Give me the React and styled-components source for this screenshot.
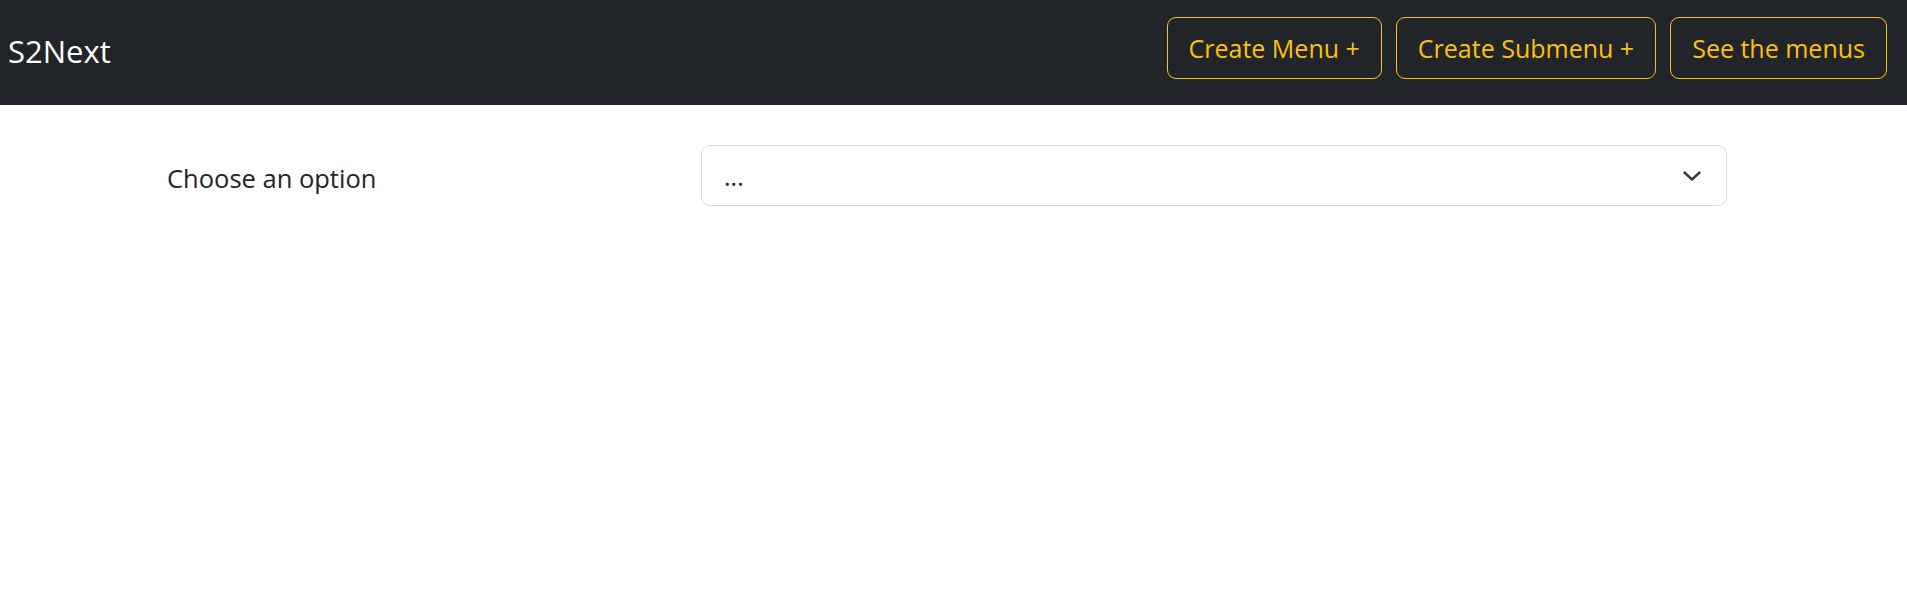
import styled, { createGlobalStyle } from 'styled-components'

const GlobalStyle = createGlobalStyle`
body {
    margin: 0;
    background: #fff;
    font-family: "Open Sans", "Noto Sans", sans-serif;
    color: #212529;
}
`

const Navbar = styled.nav`
display: flex;
align-items: center;
justify-content: space-between;
height: 105px;
padding: 0 20px 0 8px;
background-color: #212529;
`
const Brand = styled.a`
color: #fff;
font-size: 31px;
line-height: 1;
text-decoration: none;
padding-bottom: 2px;
`
const Actions = styled.div`
display: flex;
gap: 14px;
margin-bottom: 9px;
`
const NavButton = styled.button`
height: 62px;
padding: 0 21px;
font-family: inherit;
font-size: 25px;
color: #ffc107;
background: transparent;
border: 1.5px solid #ffc107;
border-radius: 9px;
cursor: pointer;
&:hover{
    background-color: #ffc107;
    color: #000;
}
`
const Form = styled.form`
display: grid;
grid-template-columns: 534px 1026px;
align-items: center;
margin: 40px 0 0 167px;
`
const Label = styled.label`
font-size: 25.5px;
padding-top: 4px;
`
const SelectWrap = styled.div`
position: relative;
height: 61px;
`
const Select = styled.select`
appearance: none;
width: 100%;
height: 100%;
box-sizing: border-box;
padding: 0 60px 0 22px;
font-family: inherit;
font-size: 25px;
color: #212529;
background: #fff;
border: 1.5px solid #d6dadf;
border-radius: 9px;
outline: none;
`
const Chevron = styled.svg`
position: absolute;
right: 26px;
top: 26px;
pointer-events: none;
`

const App = () => {
    return (
        <>
            <GlobalStyle />
            <Navbar>
                <Brand href="#">S2Next</Brand>
                <Actions>
                    <NavButton>Create Menu +</NavButton>
                    <NavButton>Create Submenu +</NavButton>
                    <NavButton>See the menus</NavButton>
                </Actions>
            </Navbar>
            <Form>
                <Label htmlFor="option">Choose an option</Label>
                <SelectWrap>
                    <Select id="option" defaultValue="">
                        <option value="">...</option>
                    </Select>
                    <Chevron width="18" height="10" viewBox="0 0 18 10">
                        <path d="M1.5 1.5 9 8.5l7.5-7" fill="none" stroke="#343a40" strokeWidth="2.4" strokeLinecap="round" strokeLinejoin="round" />
                    </Chevron>
                </SelectWrap>
            </Form>
        </>
    )
}

export default App
